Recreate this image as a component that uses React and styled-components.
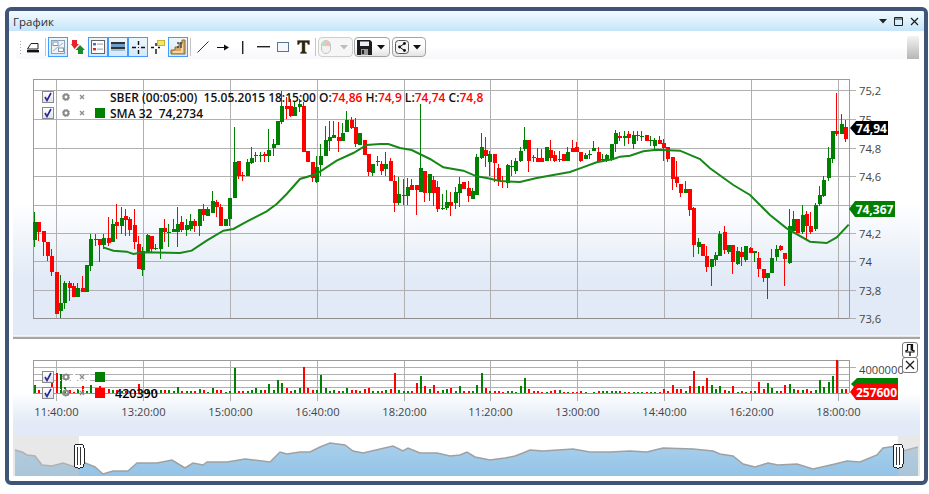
// График: окно со свечным графиком, объёмами и навигатором
import React from 'react';
import styled, { createGlobalStyle } from 'styled-components';

const GlobalStyle = createGlobalStyle`
  html, body {
    margin: 0;
    padding: 0;
    background: #fff;
    font-family: "Open Sans", "Liberation Sans", sans-serif;
  }
`;

const GREEN = '#008000';
const RED = '#ff0000';
const GRID = '#b0b0b0';

// свечи: цвет, верх тела, низ тела, максимум, минимум (в тройном масштабе по y)
const CANDLES = [
  ['g',430,482,398,503],['r',430,458,430,485],['r',457,490,457,530],['r',490,532,490,545],['r',532,578,510,590],
  ['r',580,704,580,704],['g',672,695,588,718],['g',612,672,605,690],['r',612,628,605,665],['r',622,653,612,653],
  ['g',628,653,612,653],['r',628,640,590,640],['g',558,640,558,640],['g',480,560,465,575],['g',480,481,465,500],
  ['r',480,497,480,550],['g',478,497,465,510],['r',478,492,415,500],['g',435,488,420,488],['r',430,440,375,480],
  ['g',418,440,385,465],['r',412,422,390,470],['r',420,452,415,470],['r',438,488,390,510],['r',495,570,470,570],
  ['g',516,572,505,590],['g',468,518,465,518],['r',470,510,470,522],['g',508,510,495,512],['g',448,510,448,540],
  ['r',448,460,420,490],['g',460,461,435,505],['g',450,458,420,458],['g',435,460,385,505],['r',428,452,410,460],
  ['g',438,452,420,470],['g',427,450,405,455],['r',427,440,420,460],['g',390,440,390,470],['r',390,408,375,425],
  ['g',390,410,385,410],['g',367,402,337,402],['r',370,385,362,415],['r',385,440,375,440],['g',420,440,420,440],
  ['g',357,420,357,440],['g',250,356,145,356],['r',245,290,245,300],['r',287,290,280,305],['g',250,290,240,290],
  ['g',237,252,205,255],['g',228,230,218,250],['g',228,229,218,250],['r',225,230,220,250],['g',213,230,150,250],
  ['g',195,207,180,230],['g',127,197,125,197],['g',82,130,35,135],['r',82,90,55,120],['r',82,110,60,115],
  ['g',85,110,70,110],['g',75,85,60,100],['r',82,218,68,218],['r',215,250,215,250],['r',250,298,250,310],
  ['g',265,310,230,312],['g',230,258,195,290],['g',183,230,140,232],['g',175,185,125,215],['g',168,178,125,178],
  ['r',175,185,130,220],['g',162,186,133,186],['g',123,158,96,158],['r',123,148,115,150],['r',145,195,118,205],
  ['g',162,198,162,198],['r',183,227,183,227],['r',225,278,225,290],['g',255,282,255,290],['g',247,249,232,262],
  ['r',255,275,245,288],['g',255,270,218,290],['r',245,307,237,307],['r',306,372,288,398],['g',345,372,295,378],
  ['g',348,350,300,378],['g',324,350,298,378],['r',318,333,300,333],['r',318,333,318,407],['g',267,340,75,340],
  ['r',276,342,276,370],['g',285,342,285,365],['r',303,342,290,380],['r',323,390,305,398],['g',388,390,345,392],
  ['g',370,388,332,392],['r',370,380,340,410],['g',340,372,325,390],['g',316,342,295,385],['r',310,330,310,330],
  ['r',327,350,305,368],['g',336,360,327,360],['g',233,348,225,348],['g',205,238,162,240],['r',213,231,175,265],
  ['g',225,248,215,290],['r',225,252,225,310],['r',267,305,255,320],['r',305,310,290,327],['g',258,312,255,327],
  ['g',262,265,242,290],['g',247,275,238,285],['g',216,245,205,250],['g',183,210,145,215],['r',183,245,183,278],
  ['r',235,238,228,250],['r',237,248,207,248],['r',237,248,210,248],['g',205,245,205,245],['r',213,237,182,245],
  ['r',228,245,215,248],['g',240,242,215,248],['r',225,245,225,245],['g',220,245,205,245],['r',208,218,183,218],
  ['r',205,220,190,220],['r',220,245,220,248],['g',227,240,222,240],['g',225,228,212,240],['g',207,215,185,215],
  ['r',219,245,205,248],['g',240,242,225,248],['g',227,245,225,248],['g',195,240,195,245],['g',162,195,153,218],
  ['r',170,178,158,185],['g',172,178,155,200],['r',165,178,155,195],['g',168,195,155,210],['g',168,170,155,185],
  ['g',170,172,157,185],['r',167,185,167,187],['g',183,185,170,200],['g',183,200,178,210],['r',183,195,170,195],
  ['r',192,207,180,247],['r',205,240,205,250],['r',235,300,235,332],['r',295,312,245,325],['r',315,342,315,355],
  ['g',330,342,305,342],['r',330,392,330,410],['r',387,497,385,533],['g',490,503,478,525],['r',495,530,495,530],
  ['r',532,563,500,580],['g',540,563,540,620],['g',528,542,520,560],['g',465,530,455,530],['r',460,513,440,525],
  ['g',498,518,498,525],['r',498,548,498,585],['g',517,555,505,558],['r',520,533,505,560],['g',500,543,500,548],
  ['r',507,523,503,523],['g',517,523,517,548],['r',538,570,518,595],['r',570,598,570,608],['g',583,598,583,660],
  ['g',538,582,510,582],['g',510,533,497,545],['r',500,512,497,515],['r',522,540,522,620],['g',442,552,390,555],
  ['g',420,455,395,455],['r',420,462,420,462],['g',408,460,378,465],['r',405,442,397,480],['r',442,460,400,465],
  ['g',377,450,373,455],['g',348,376,320,380],['g',303,352,290,355],['g',237,297,205,305],['g',157,240,155,252],
  ['r',157,165,42,170],['g',135,165,105,165],['r',143,180,123,188],
];

// высоты столбиков объёма, тоже в тройном масштабе
const VOLUMES = [
  25,10,6,6,30,60,58,18,10,10,13,20,6,25,10,20,6,13,8,10,6,6,6,6,26,6,10,8,6,8,8,8,6,18,6,6,6,6,12,10,4,15,8,8,3,6,
  75,6,6,6,10,15,10,10,27,8,38,30,15,6,8,15,78,16,10,8,55,15,7,10,6,6,15,10,10,6,12,15,6,6,6,10,12,60,10,6,6,6,30,
  52,22,13,25,6,10,13,15,6,20,6,6,6,25,60,15,6,6,6,3,6,6,3,20,45,12,6,6,3,3,6,10,10,3,3,3,3,6,3,0,2,6,6,6,6,6,6,3,3,
  3,3,3,3,3,3,3,12,6,25,13,13,6,22,65,20,22,45,25,13,20,10,5,20,3,6,3,5,5,32,13,30,15,6,6,25,28,13,10,10,13,5,8,40,
  18,33,52,100,13,13,
];

const SMA_1 = [[250,505],[280,515],[320,518],[340,525],[370,520],[480,522],[515,515],[560,485],[610,455],[640,450],[680,428],[740,397],[770,375],[800,345],[840,300],[890,285]];
const SMA_2 = [[0,278],[50,245],[100,222],[140,198],[180,195],[205,195],[240,207],[275,213],[330,240],[370,265],[430,275],[470,292],[500,297],[540,306],[600,309],[650,297],[750,279],[780,268],[830,250],[880,240],[900,233]];
const SMA_3 = [[30,230],[70,217],[110,212],[180,215],[240,240],[270,268],[340,318],[390,348],[450,408],[500,448],[570,488],[620,492],[650,475],[686,437]];

const smaPoints = [
  ...SMA_1.map(([x, y]) => [20 + x / 3, 80 + y / 3]),
  ...SMA_2.map(([x, y]) => [320 + x / 3, 80 + y / 3]),
  ...SMA_3.map(([x, y]) => [620 + x / 3, 80 + y / 3]),
].map((p) => p.join(',')).join(' ');

const NAV_LINE = [
  [15,451],[22,453],[27,456],[35,457],[42,466],[52,467],[63,464],[75,468],[83,463],[95,468],[103,475],[113,472],[128,472],
  [137,464],[157,464],[172,461],[185,469],[193,464],[203,466],[207,463],[227,463],[245,460],[270,463],[280,453],[287,455],
  [300,453],[310,453],[320,448],[330,444],[345,446],[353,452],[363,454],[393,447],[403,452],[408,449],[420,454],[437,454],
  [450,457],[460,456],[467,453],[475,458],[490,461],[505,459],[515,457],[523,454],[530,451],[543,452],[573,450],[590,453],
  [610,453],[630,452],[647,453],[663,449],[693,450],[713,452],[720,455],[733,457],[743,465],[755,468],[768,464],[778,466],
  [797,465],[813,470],[835,465],[847,462],[860,463],[877,456],[883,449],[897,447],[903,452],[918,448],
];

const TIME_TICKS = [
  [56, '11:40:00'], [143, '13:20:00'], [230, '15:00:00'], [317, '16:40:00'], [404, '18:20:00'],
  [490, '11:20:00'], [577, '13:00:00'], [664, '14:40:00'], [751, '16:20:00'], [838, '18:00:00'],
];

const PRICE_TICKS = [
  [91, '75,2'], [119.5, '75'], [148.5, '74,8'], [176.5, '74,6'], [205.5, '74,4'],
  [234, '74,2'], [262, '74'], [290.5, '73,8'], [319, '73,6'],
];

const VOLUME_LINES = [368, 375, 381, 388];

const candleX = (i) => Math.round(35 + i * 4.337);

const Page = styled.div`
  width: 929px;
  height: 494px;
  padding: 7px 0 0 5px;
  box-sizing: border-box;
  overflow: hidden;
`;

const Window = styled.div`
  width: 923px;
  height: 478px;
  box-sizing: border-box;
  border: 4px solid #3f5477;
  border-radius: 6px;
  background: #fff;
  overflow: hidden;
`;

const TitleBar = styled.div`
  height: 20px;
  display: flex;
  align-items: center;
  justify-content: space-between;
  padding: 0 5px 0 4px;
  background: linear-gradient(#f4fbff, #c5e5f9);
`;

const Title = styled.span`
  font-size: 11.5px;
  color: #303030;
`;

const TitleButtons = styled.div`
  display: flex;
  align-items: center;
  gap: 7px;
`;

const Body = styled.div`
  padding: 5px 4px 0;
`;

const Toolbar = styled.div`
  height: 23px;
  margin-left: 3px;
  width: 903px;
  box-sizing: border-box;
  padding: 1px 0 0 3px;
  display: flex;
  align-items: flex-start;
  border-radius: 4px 0 0 4px;
  background: linear-gradient(#fff 40%, #f8f7f9);
`;

const Grip = styled.span`
  width: 3px;
  height: 14px;
  margin: 3px 1px 0 0;
  background-image: radial-gradient(#a8a8a8 1px, transparent 1px);
  background-size: 3px 3px;
`;

const Separator = styled.span`
  width: 1px;
  height: 18px;
  margin: 1px 2px 0;
  background: #c4c4c4;
`;

const ToolButton = styled.span`
  width: 20px;
  height: 20px;
  box-sizing: border-box;
  display: flex;
  align-items: center;
  justify-content: center;
  ${(p) => p.$active && `
    border: 1px solid #429cff;
    background: linear-gradient(#eef6fd, #d6e8f9);
  `}
`;

const Combo = styled.span`
  width: ${(p) => p.$width}px;
  height: 20px;
  margin-left: ${(p) => p.$gap || 0}px;
  box-sizing: border-box;
  display: flex;
  align-items: center;
  justify-content: space-between;
  padding: 0 4px 0 2px;
  border: 1px solid ${(p) => (p.$disabled ? '#cfcfcf' : '#a3a3a3')};
  border-radius: 4px;
  background: ${(p) => (p.$disabled ? '#f6f6f6' : 'linear-gradient(#fff 45%, #e3e3e3)')};
`;

const ScrollGrip = styled.span`
  width: 12px;
  height: 23px;
  margin: -1px 0 0 auto;
  border-radius: 2px 2px 0 0;
  background: linear-gradient(#f3f3f3, #b6b6b6);
`;

const Pane = styled.div`
  position: relative;
  width: 907px;
  height: ${(p) => p.$height}px;
  background: linear-gradient(#fff ${(p) => p.$from}%, #e1eaf6 ${(p) => p.$to}%);
`;

const Splitter = styled.div`
  width: 907px;
  height: 4px;
  box-sizing: border-box;
  border-top: 1px solid #f4f4f4;
  border-bottom: 2px solid #a6a6a6;
  background: #e6e6e6;
`;

const ChartSvg = styled.svg`
  display: block;
  width: 907px;
  height: ${(p) => p.$height}px;
  shape-rendering: crispEdges;

  text {
    font-family: "Open Sans", "Liberation Sans", sans-serif;
    font-size: 11.2px;
    fill: #444;
  }
`;

const Legend = styled.div`
  position: absolute;
  left: 29px;
  top: ${(p) => p.$top}px;
  display: flex;
  flex-direction: column;
`;

const LegendRow = styled.div`
  height: 16px;
  display: flex;
  align-items: center;
  font-size: 12px;
  font-weight: 600;
  color: #111;
  white-space: pre;
`;

const CheckBox = styled.span`
  width: 12px;
  height: 12px;
  box-sizing: border-box;
  display: flex;
  align-items: center;
  justify-content: center;
  border: 1px solid #8a8a8a;
  background: linear-gradient(#fff, #dfe0f4);
`;

const MiniIcon = styled.span`
  width: 16px;
  display: flex;
  align-items: center;
  justify-content: center;
  ${(p) => p.$dashed && 'outline: 1px dashed rgba(255, 255, 255, 0.9); outline-offset: -1px;'}
`;

const IconRow = styled.span`
  width: 41px;
  display: flex;
  justify-content: flex-start;
  padding-left: 4px;
  box-sizing: border-box;
`;

const Swatch = styled.span`
  width: 10px;
  height: 10px;
  margin-right: 5px;
  background: ${(p) => p.$color || 'transparent'};
`;

const RedValue = styled.span`
  color: #f00;
`;

const VolumeValue = styled.span`
  margin: 1px 0 0 5px;
  font-size: 12.5px;
  color: #000;
`;

const PriceTag = styled.span`
  position: absolute;
  left: ${(p) => p.$left}px;
  top: ${(p) => p.$top}px;
  width: ${(p) => p.$width}px;
  height: ${(p) => p.$height}px;
  padding-left: 5px;
  box-sizing: border-box;
  display: flex;
  align-items: center;
  justify-content: center;
  font-size: 12px;
  font-weight: 700;
  color: #fff;
  background: ${(p) => p.$color};
  clip-path: polygon(6px 0, 100% 0, 100% 100%, 6px 100%, 0 50%);
`;

const PaneButton = styled.span`
  position: absolute;
  left: 889px;
  top: ${(p) => p.$top}px;
  width: 16px;
  height: 16px;
  box-sizing: border-box;
  display: flex;
  align-items: center;
  justify-content: center;
  border: 1px solid #777;
  border-radius: 3px;
  background: #fff;
`;

const Icon = ({ w = 14, h = 14, children }) => (
  <svg width={w} height={h} viewBox={`0 0 ${w} ${h}`}>{children}</svg>
);

const Check = () => (
  <Icon w={10} h={10}>
    <path d="M2 5 L4 8.5 L8 1" fill="none" stroke="#28288f" strokeWidth="1.6" />
  </Icon>
);

const Gear = () => (
  <Icon w={8} h={8}>
    <circle cx="4" cy="4" r="2.4" fill="none" stroke="#8c8c8c" strokeWidth="2" />
    <circle cx="4" cy="4" r="3.6" fill="none" stroke="#8c8c8c" strokeWidth="1" strokeDasharray="1.4 1.4" />
  </Icon>
);

const SmallCross = () => (
  <Icon w={6} h={6}>
    <path d="M1 1 L5 5 M5 1 L1 5" stroke="#8c8c8c" strokeWidth="1.3" />
  </Icon>
);

const DownArrow = ({ color = '#111' }) => (
  <Icon w={8} h={5}>
    <path d="M0 0 H8 L4 4.5 Z" fill={color} />
  </Icon>
);

const LegendLine = ({ color, dashed, children }) => (
  <LegendRow>
    <CheckBox><Check /></CheckBox>
    <IconRow>
      <MiniIcon $dashed={dashed}><Gear /></MiniIcon>
      <MiniIcon $dashed={dashed}><SmallCross /></MiniIcon>
    </IconRow>
    <Swatch $color={color} />
    {children}
  </LegendRow>
);

const EraserIcon = () => (
  <Icon>
    <path d="M1.5 9 L5 3.5 H12 V9 Z" fill="#fff" stroke="#222" strokeWidth="1" />
    <rect x="1" y="10" width="12" height="2.4" fill="#111" />
  </Icon>
);

const ChartBoxIcon = () => (
  <Icon w={16} h={16}>
    <rect x="1.5" y="1.5" width="13" height="13" fill="#eef3f8" stroke="#8aa0b4" />
    <rect x="3" y="3" width="5" height="3.5" fill="#fff" stroke="#7f97ad" />
    <rect x="8.5" y="9" width="5" height="3.5" fill="#fff" stroke="#7f97ad" />
    <path d="M3 12 L13 4" stroke="#9fb2c4" />
  </Icon>
);

const ArrowsIcon = () => (
  <Icon w={14} h={16}>
    <path d="M1 1 H6 V5 H8 L3.5 10 L0 5 H1 Z" fill="#e8202a" />
    <path d="M9 6 L14 11 H12 V15 H7 V11 H4.5 Z" fill="#1b8a2a" />
  </Icon>
);

const LegendIcon = () => (
  <Icon w={14} h={14}>
    <rect x="0.5" y="0.5" width="13" height="13" fill="#fff" stroke="#666" />
    <rect x="2" y="3" width="3" height="2.4" fill="#3a76c4" />
    <rect x="6" y="3.6" width="6" height="1" fill="#999" />
    <rect x="2" y="8" width="3" height="2.4" fill="#d9252a" />
    <rect x="6" y="8.6" width="6" height="1" fill="#999" />
  </Icon>
);

const BandIcon = () => (
  <Icon w={14} h={12}>
    <rect x="0" y="1" width="14" height="2" fill="#333" />
    <rect x="0" y="3" width="14" height="3" fill="#6f9fc8" />
    <rect x="0" y="6" width="14" height="2" fill="#333" />
    <rect x="0" y="8" width="14" height="2" fill="#9dbfdc" />
  </Icon>
);

const CrossIcon = () => (
  <Icon w={13} h={13}>
    <path d="M6.5 0 V4 M6.5 9 V13 M0 6.5 H4 M9 6.5 H13" stroke="#111" strokeWidth="1.4" />
    <rect x="6" y="6" width="1" height="1" fill="#111" />
  </Icon>
);

const CrossNoteIcon = () => (
  <Icon w={14} h={14}>
    <path d="M5 3 V6 M5 9 V14 M0 7.5 H3 M7 7.5 H9" stroke="#111" strokeWidth="1.4" />
    <rect x="6.5" y="0.5" width="7" height="5" fill="#f7e46a" stroke="#c9b23c" />
  </Icon>
);

const StairsIcon = () => (
  <Icon w={16} h={16}>
    <path d="M1 15 V11 H5 V8 H9 V4 H12 V1 H15 V15 Z" fill="#d9a860" stroke="#8d6a30" />
    <path d="M3 13 H12 V5" fill="none" stroke="#f0d6a8" strokeWidth="2" />
    <path d="M8 7 V9 M11 3 V9 M8 3 V5" stroke="#333" strokeWidth="1.3" />
  </Icon>
);

const LineIcon = () => (
  <Icon w={12} h={12}>
    <path d="M0.5 11.5 L11.5 0.5" stroke="#333" strokeWidth="1" style={{ shapeRendering: 'auto' }} />
  </Icon>
);

const ArrowIcon = () => (
  <Icon w={12} h={7}>
    <path d="M0 3.5 H8" stroke="#111" strokeWidth="1.2" />
    <path d="M7 0.5 L12 3.5 L7 6.5 Z" fill="#111" />
  </Icon>
);

const VLineIcon = () => (
  <Icon w={2} h={13}>
    <rect x="0" y="0" width="1.4" height="13" fill="#222" />
  </Icon>
);

const HLineIcon = () => (
  <Icon w={13} h={2}>
    <rect x="0" y="0" width="13" height="1.4" fill="#222" />
  </Icon>
);

const RectIcon = () => (
  <Icon w={12} h={10}>
    <rect x="0.5" y="0.5" width="11" height="9" fill="#f4f8fc" stroke="#5a7694" />
  </Icon>
);

const TextToolIcon = () => (
  <Icon w={13} h={14}>
    <path d="M0.5 0.5 H12.5 V4.5 H11 L10 2.5 H8 V11.5 L9.5 12.5 V13.5 H3.5 V12.5 L5 11.5 V2.5 H3 L2 4.5 H0.5 Z" fill="#2a2414" stroke="#6d6344" strokeWidth="0.5" />
  </Icon>
);

const MouseIcon = () => (
  <Icon w={10} h={14}>
    <rect x="0.5" y="0.5" width="9" height="13" rx="4.5" fill="#f2f2f2" stroke="#c4c4c4" />
    <path d="M1 6 V4 A4 4 0 0 1 5 1 V6 Z" fill="#b9dfb9" />
    <path d="M9 6 V4 A4 4 0 0 0 5 1 V6 Z" fill="#eebcbc" />
  </Icon>
);

const FloppyIcon = () => (
  <Icon w={15} h={15}>
    <path d="M0 0 H13 L15 2 V15 H0 Z" fill="#1d1d1d" />
    <rect x="3" y="1.5" width="9" height="4.5" fill="#e8eef4" />
    <rect x="4" y="9" width="7" height="6" fill="#9a9a9a" />
    <rect x="5" y="10" width="2" height="4" fill="#222" />
  </Icon>
);

const ShareIcon = () => (
  <Icon w={14} h={14}>
    <rect x="0.5" y="0.5" width="13" height="13" rx="3" fill="#f4f4f4" stroke="#555" />
    <path d="M9.5 3.5 L4.5 7 L9.5 10.5" fill="none" stroke="#111" strokeWidth="1" />
    <circle cx="9.5" cy="3.5" r="1.4" fill="#111" />
    <circle cx="4.5" cy="7" r="1.4" fill="#111" />
    <circle cx="9.5" cy="10.5" r="1.4" fill="#111" />
  </Icon>
);

const PinIcon = () => (
  <Icon w={10} h={12}>
    <path d="M2.5 0.5 H7.5 V6.5 H9 V8 H1 V6.5 H2.5 Z" fill="#fff" stroke="#111" strokeWidth="1.2" />
    <path d="M5 8 V12" stroke="#111" strokeWidth="1.4" />
    <rect x="5.6" y="1" width="1.4" height="5.5" fill="#111" />
  </Icon>
);

const CloseIcon = ({ size = 10, width = 1.3 }) => (
  <Icon w={size} h={size}>
    <path d={`M1 1 L${size - 1} ${size - 1} M${size - 1} 1 L1 ${size - 1}`} stroke="#1d1d1d" strokeWidth={width} style={{ shapeRendering: 'auto' }} />
  </Icon>
);

const Candles = () =>
  CANDLES.map(([c, top, bottom, high, low], i) => {
    const color = c === 'g' ? GREEN : RED;
    const x = candleX(i);
    const y = (v) => 80 + v / 3;
    return (
      <g key={i} fill={color}>
        <rect x={x - 1} y={y(high)} width="1" height={Math.max(1, (low - high) / 3)} />
        <rect x={x - 2} y={y(top)} width="4" height={Math.max(1, (bottom - top) / 3)} />
      </g>
    );
  });

const VolumeBars = () =>
  VOLUMES.map((v, i) => (
    <rect
      key={i}
      x={candleX(i) - 1}
      y={394 - v / 3}
      width="2"
      height={v / 3}
      fill={CANDLES[i][0] === 'g' ? GREEN : RED}
    />
  ));

const PriceChart = () => (
  <ChartSvg $height={276} viewBox="13 60 907 276">
    {PRICE_TICKS.map(([y, label]) => (
      <g key={label}>
        <rect x="33" y={Math.round(y)} width="823" height="1" fill={GRID} />
        <text x="859" y={y + 5}>{label}</text>
      </g>
    ))}
    {TIME_TICKS.map(([x]) => (
      <rect key={x} x={x} y="80" width="1" height="239" fill={GRID} />
    ))}
    <rect x="33" y="80" width="816" height="1" fill="#9a9a9a" />
    <rect x="33" y="80" width="1" height="239" fill="#9a9a9a" />
    <rect x="849" y="80" width="1" height="239" fill="#9a9a9a" />
    <rect x="33" y="319" width="816" height="1" fill="#8f8f8f" />
    <Candles />
    <polyline points={smaPoints} fill="none" stroke="#178817" strokeWidth="2" style={{ shapeRendering: 'auto' }} />
  </ChartSvg>
);

const VolumeChart = () => (
  <ChartSvg $height={97} viewBox="13 340 907 97">
    {VOLUME_LINES.map((y) => (
      <rect key={y} x="33" y={y} width={y === 368 ? 823 : 816} height="1" fill={GRID} />
    ))}
    {TIME_TICKS.map(([x, label]) => (
      <g key={x}>
        <rect x={x} y="361" width="1" height="41" fill={GRID} />
        <text x={x + 0.5} y="417" textAnchor="middle">{label}</text>
      </g>
    ))}
    <rect x="33" y="361" width="816" height="1" fill="#9a9a9a" />
    <rect x="33" y="361" width="1" height="33" fill="#9a9a9a" />
    <rect x="849" y="361" width="1" height="33" fill="#9a9a9a" />
    <rect x="33" y="394" width="816" height="1" fill="#9a9a9a" />
    <VolumeBars />
    <text x="859" y="375">4000000</text>
  </ChartSvg>
);

const Handle = ({ x }) => (
  <g>
    <rect x={x - 5} y="445" width="10" height="24" rx="4" fill="#fff" stroke="#222" />
    <rect x={x - 2} y="448" width="1" height="18" fill="#333" />
    <rect x={x + 1} y="448" width="1" height="18" fill="#333" />
  </g>
);

const Navigator = () => {
  const line = NAV_LINE.map((p) => p.join(',')).join(' ');
  return (
    <ChartSvg $height={40} viewBox="13 437 907 40">
      <defs>
        <linearGradient id="navFill" x1="0" y1="0" x2="0" y2="1">
          <stop offset="0" stopColor="#a9d0ec" />
          <stop offset="1" stopColor="#93c3e6" />
        </linearGradient>
      </defs>
      <polygon points={`15,477 ${line} 918,477`} fill="url(#navFill)" style={{ shapeRendering: 'auto' }} />
      <polyline points={line} fill="none" stroke="#a0a0a0" strokeWidth="1.5" style={{ shapeRendering: 'auto' }} />
      <rect x="13" y="437" width="66" height="40" fill="rgba(200,200,200,0.42)" />
      <rect x="898" y="437" width="22" height="40" fill="rgba(200,200,200,0.42)" />
      <Handle x={79} />
      <Handle x={898} />
    </ChartSvg>
  );
};

const ChartToolbar = () => (
  <Toolbar>
    <Grip />
    <ToolButton><EraserIcon /></ToolButton>
    <Separator />
    <ToolButton $active><ChartBoxIcon /></ToolButton>
    <ToolButton><ArrowsIcon /></ToolButton>
    <ToolButton $active><LegendIcon /></ToolButton>
    <ToolButton $active><BandIcon /></ToolButton>
    <ToolButton $active><CrossIcon /></ToolButton>
    <ToolButton><CrossNoteIcon /></ToolButton>
    <ToolButton $active><StairsIcon /></ToolButton>
    <Separator />
    <ToolButton><LineIcon /></ToolButton>
    <ToolButton><ArrowIcon /></ToolButton>
    <ToolButton><VLineIcon /></ToolButton>
    <ToolButton><HLineIcon /></ToolButton>
    <ToolButton><RectIcon /></ToolButton>
    <ToolButton><TextToolIcon /></ToolButton>
    <Separator />
    <Combo $width={35} $disabled>
      <MouseIcon />
      <DownArrow color="#bdbdbd" />
    </Combo>
    <Combo $width={36} $gap={1}>
      <FloppyIcon />
      <DownArrow />
    </Combo>
    <Combo $width={34} $gap={2}>
      <ShareIcon />
      <DownArrow />
    </Combo>
    <ScrollGrip />
  </Toolbar>
);

const App = () => (
  <Page>
    <GlobalStyle />
    <Window>
      <TitleBar>
        <Title>График</Title>
        <TitleButtons>
          <DownArrow color="#222" />
          <Icon w={9} h={9}>
            <path d="M0.5 0.5 H8.5 V8.5 H0.5 Z M0.5 2 H8.5" fill="none" stroke="#222" strokeWidth="1" />
          </Icon>
          <CloseIcon size={9} width={1.2} />
        </TitleButtons>
      </TitleBar>
      <Body>
        <ChartToolbar />
        <Pane $height={276} $from={52} $to={80}>
          <PriceChart />
          <Legend $top={30}>
            <LegendLine>
              {'SBER (00:05:00)  15.05.2015 18:15:00 O:'}
              <RedValue>74,86</RedValue>
              {' H:'}
              <RedValue>74,9</RedValue>
              {' L:'}
              <RedValue>74,74</RedValue>
              {' C:'}
              <RedValue>74,8</RedValue>
            </LegendLine>
            <LegendLine color={GREEN}>{'SMA 32  74,2734'}</LegendLine>
          </Legend>
          <PriceTag $left={837} $top={62} $width={38} $height={14} $color="#000">74,94</PriceTag>
          <PriceTag $left={836} $top={142} $width={46} $height={16} $color="#007f00">74,367</PriceTag>
        </Pane>
        <Splitter />
        <Pane $height={97} $from={55} $to={86}>
          <VolumeChart />
          <Legend $top={30}>
            <LegendLine color={GREEN} dashed />
            <LegendLine color={RED} dashed>
              <VolumeValue>420390</VolumeValue>
            </LegendLine>
          </Legend>
          <PriceTag $left={838} $top={39} $width={47} $height={12} $color="#007f00" />
          <PriceTag $left={837} $top={45} $width={48} $height={16} $color={RED}>257600</PriceTag>
          <PaneButton $top={3}><PinIcon /></PaneButton>
          <PaneButton $top={18}><CloseIcon /></PaneButton>
        </Pane>
        <Navigator />
      </Body>
    </Window>
  </Page>
);

export default App;
